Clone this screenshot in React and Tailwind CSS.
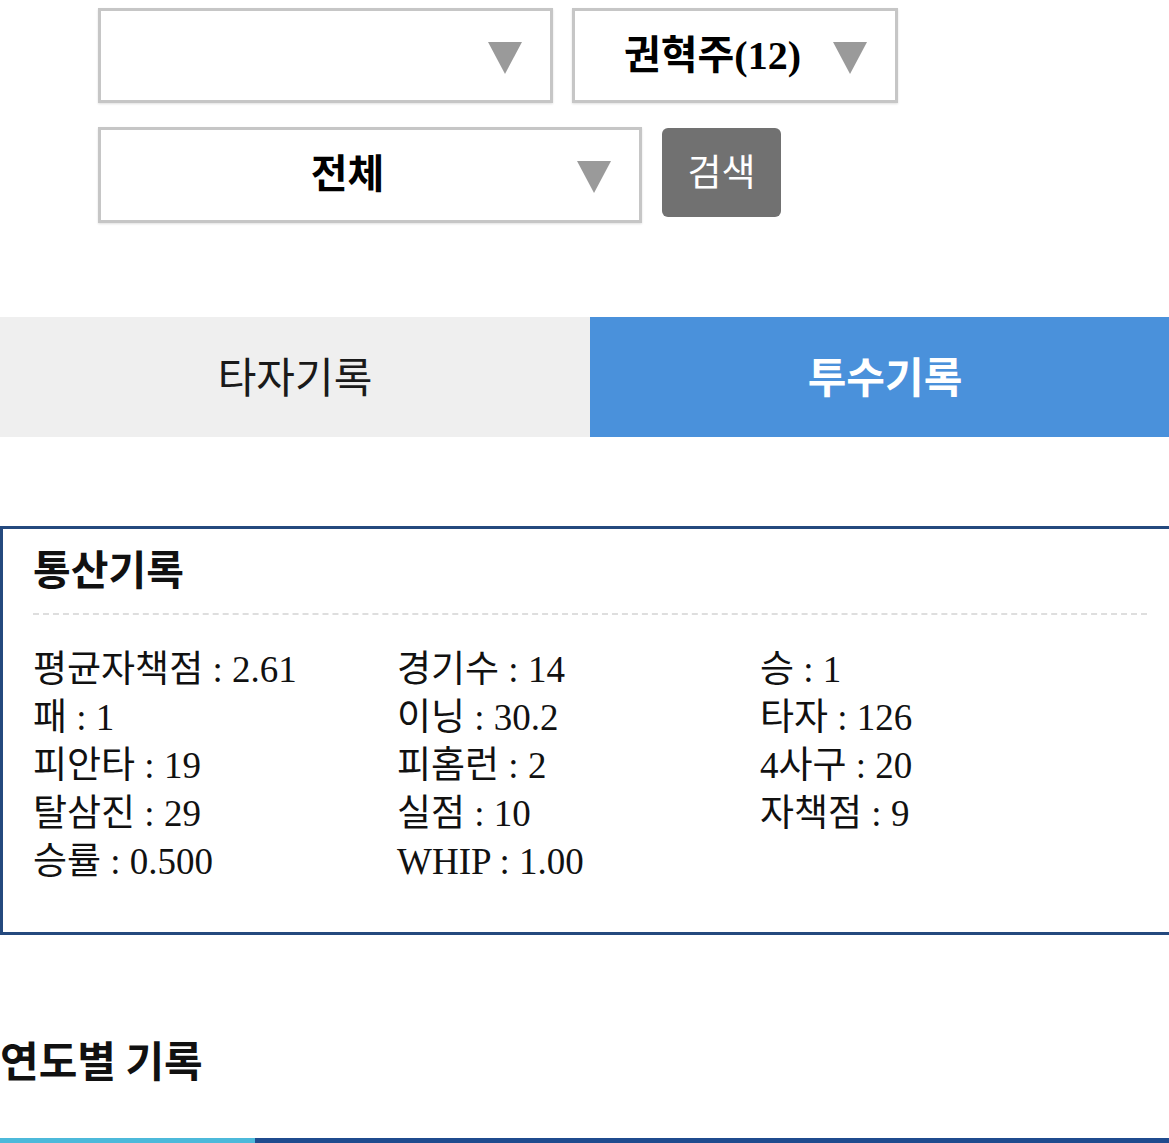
const stats = [
  ["평균자책점 : 2.61", "경기수 : 14", "승 : 1"],
  ["패 : 1", "이닝 : 30.2", "타자 : 126"],
  ["피안타 : 19", "피홈런 : 2", "4사구 : 20"],
  ["탈삼진 : 29", "실점 : 10", "자책점 : 9"],
  ["승률 : 0.500", "WHIP : 1.00", ""],
];

const Arrow = () => (
  <svg className="ml-[-17px] mr-[28px] mt-[4px] h-[32px] w-[34px] shrink-0" viewBox="0 0 34 32">
    <path d="M0 0H34L17 32Z" fill="#9a9a9a" />
  </svg>
);

const Select = ({ label, className }) => (
  <div
    className={`flex items-center border-[3px] border-[#c6c6c6] bg-white shadow-[0_1px_2px_rgba(0,0,0,0.12)] ${className}`}
  >
    <span className="flex-1 text-center text-[40px] font-bold text-black">{label}</span>
    <Arrow />
  </div>
);

export default function App() {
  return (
    <div
      className="w-full overflow-hidden bg-white"
      style={{ fontFamily: '"Liberation Serif", "Noto Sans CJK KR", serif' }}
    >
      <div className="w-[1180px]">
        {/* search filters */}
        <div className="flex flex-col gap-[24px] pl-[98px] pt-[8px]">
          <div className="flex gap-[19px]">
            <Select label="" className="h-[95px] w-[455px]" />
            <Select label="권혁주(12)" className="h-[95px] w-[326px]" />
          </div>
          <div className="flex items-start gap-[20px]">
            <Select label="전체" className="h-[96px] w-[544px]" />
            <button className="mt-[1px] flex h-[89px] w-[119px] items-center justify-center rounded-[6px] bg-[#717171] pb-[4px] font-['Noto_Sans_CJK_KR',sans-serif] text-[37px] text-white">
              검색
            </button>
          </div>
        </div>

        {/* tabs */}
        <div className="mt-[94px] flex h-[120px] font-['Noto_Sans_CJK_KR',sans-serif] text-[42px]">
          <div className="flex w-[590px] items-center justify-center bg-[#efefef] pb-[6px] text-[#1a1a1a]">타자기록</div>
          <div className="flex w-[590px] items-center justify-center bg-[#4a91db] pb-[6px] font-bold text-white">투수기록</div>
        </div>

        {/* career totals */}
        <div className="mt-[89px] border-[3px] border-[#24497e] px-[30px] pb-[46px] pt-[10px]">
          <h2 className="font-['Noto_Sans_CJK_KR',sans-serif] text-[41px] font-bold leading-[56px] text-[#111]">통산기록</h2>
          <div className="mt-[18px] border-t-[2px] border-dashed border-[#dedede]" />
          <div className="mt-[31px] grid grid-cols-[364px_363px_364px] text-[37px] leading-[48px] text-[#111]">
            {stats.flat().map((s, i) => (
              <div key={i} className="whitespace-nowrap">{s}</div>
            ))}
          </div>
        </div>

        <h2 className="mt-[95px] font-['Noto_Sans_CJK_KR',sans-serif] text-[42px] font-bold leading-[58px] text-[#111]">
          연도별 기록
        </h2>
        <div className="mt-[50px] flex h-[8px]">
          <div className="w-[255px] bg-[#4cb9da]" />
          <div className="flex-1 bg-[#1f4b8e]" />
        </div>
      </div>
    </div>
  );
}
